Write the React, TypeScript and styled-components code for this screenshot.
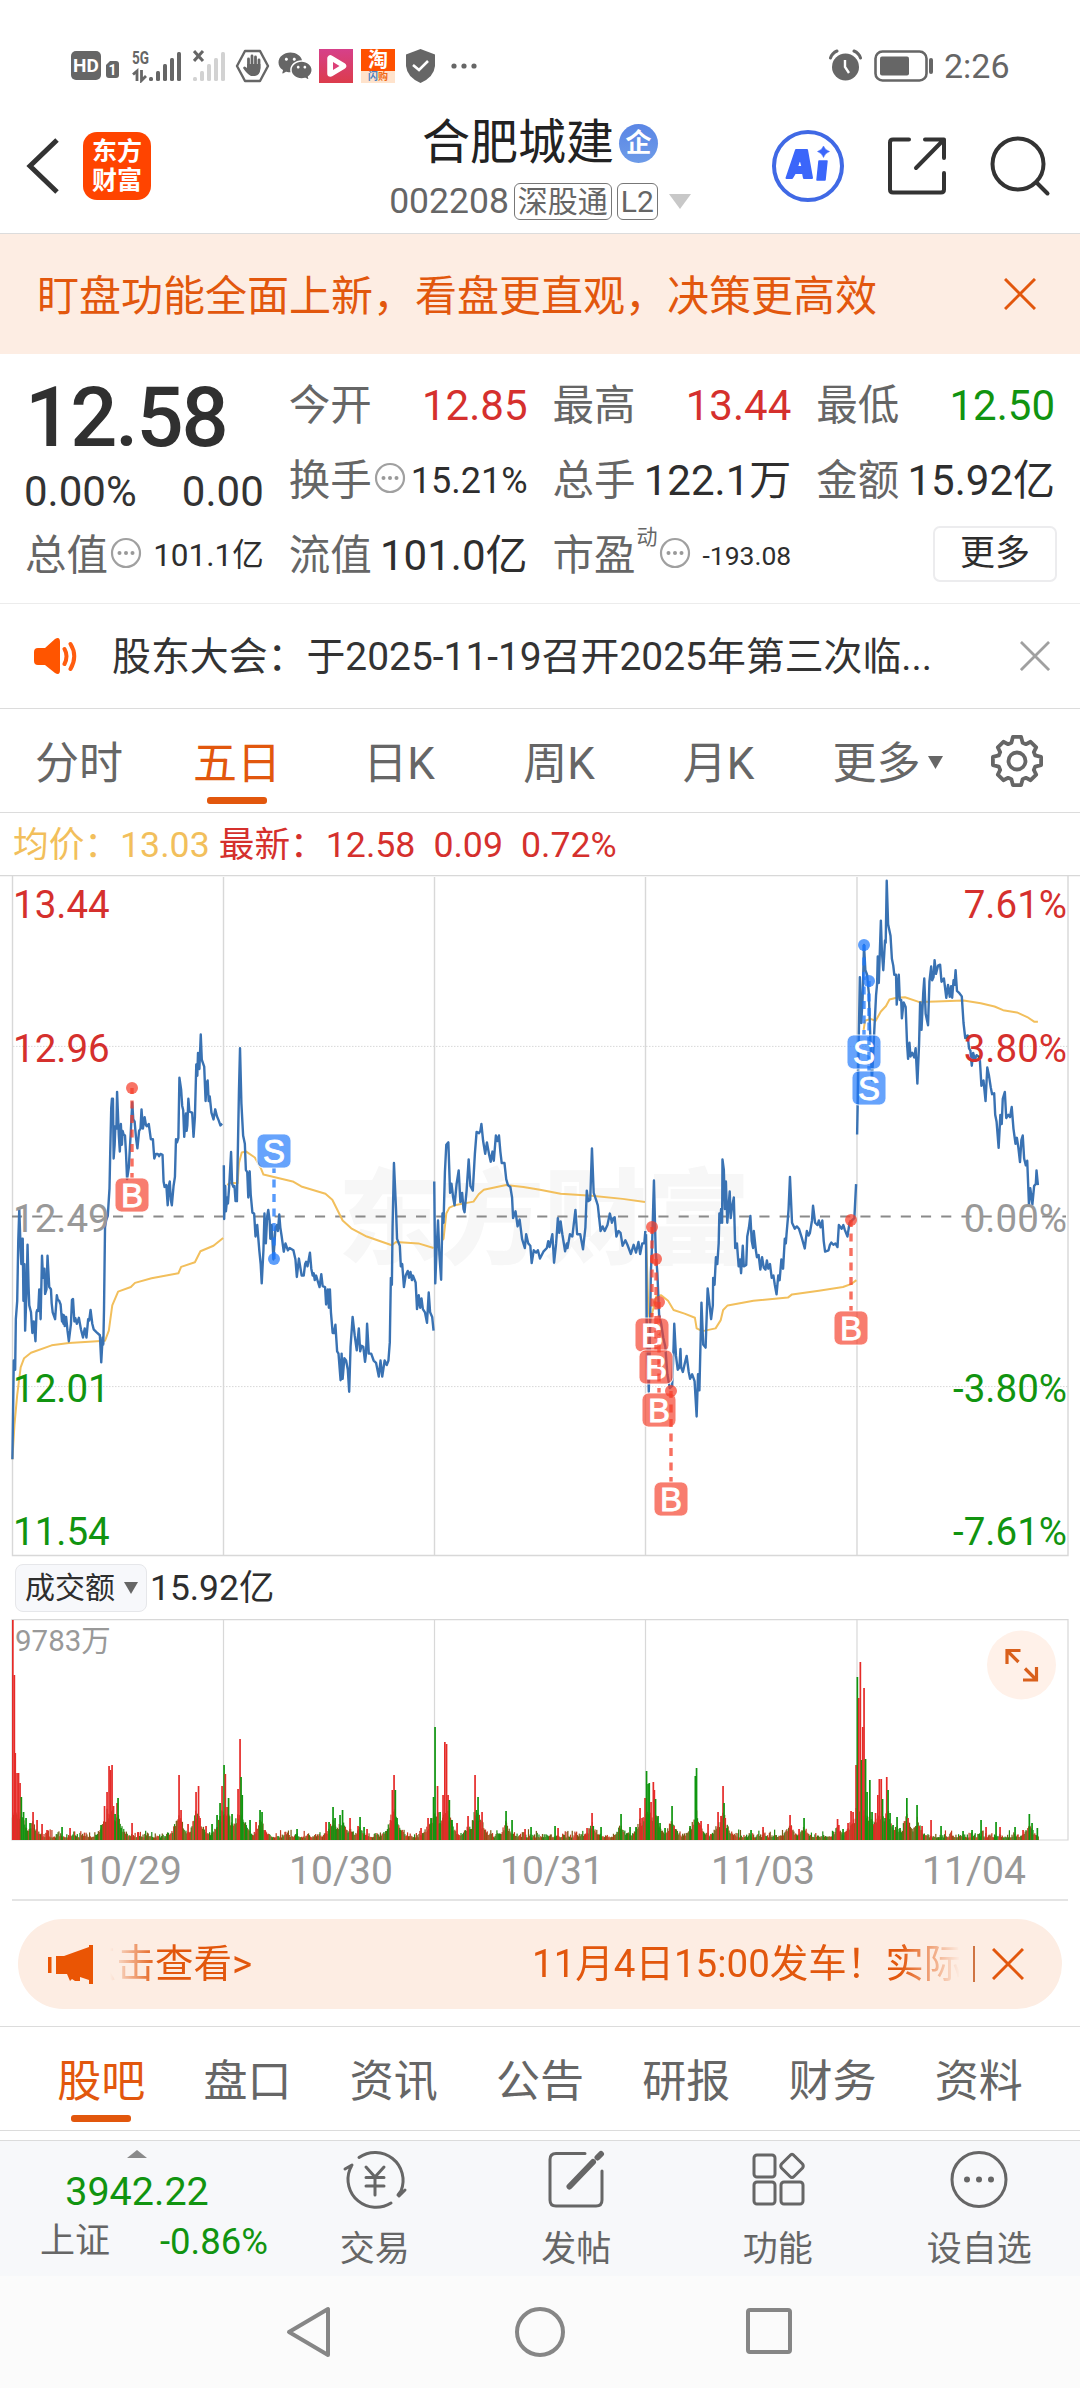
import React from "react";
import styled, { createGlobalStyle } from "styled-components";
import { RiWechatFill } from "react-icons/ri";

const C = {
  ink: "#2e2e2e",
  dark: "#333333",
  mid: "#666666",
  soft: "#999999",
  orange: "#e2570d",
  orangeBg: "#fdede3",
  red: "#d5302d",
  green: "#119410",
  blue: "#3972b3",
  gold: "#f2bf5c",
  line: "#dcdcdc",
};

const GlobalStyle = createGlobalStyle`
  html, body { margin: 0; padding: 0; background: #fff; }
  body { font-family: Roboto, "Noto Sans CJK SC", sans-serif; color: ${C.dark}; }
  * { box-sizing: border-box; }
  svg { display: block; flex: none; }
`;

const Screen = styled.main`
  width: 1080px;
  height: 2388px;
  display: flex;
  flex-direction: column;
  overflow: hidden;
  background: #fff;
`;

/* ---------- status bar ---------- */

const StatusBar = styled.header`
  height: 107px;
  flex: none;
  display: flex;
  align-items: center;
  padding: 24px 71px 0 71px;
`;
const Push = styled.div`
  flex: 1;
`;
const Glyph = styled.svg<{ $ml?: number }>`
  margin-left: ${(p) => p.$ml ?? 0}px;
`;
const WechatSlot = styled.div`
  width: 34px;
  margin-left: 7px;
  color: ${C.mid};
  font-size: 36px;
`;
const DeliveryTile = styled.div`
  width: 34px;
  height: 34px;
  margin-left: 8px;
  display: flex;
  flex-direction: column;
  align-items: center;
  background: linear-gradient(#ff5000 0 66%, #ffe3cc 66%);
`;
const TileTop = styled.span`
  color: #fff;
  font-size: 20px;
  line-height: 22px;
  font-weight: 700;
`;
const TileBottom = styled.span`
  color: #f06a18;
  font-size: 10px;
  line-height: 11px;
  font-weight: 700;
  i { color: #4a80c0; font-style: normal; }
`;
const Clock = styled.span`
  margin-left: 10px;
  width: 65px;
  font-size: 34px;
  line-height: 40px;
  color: ${C.mid};
`;

/* ---------- title bar ---------- */

const TitleBar = styled.div`
  height: 127px;
  flex: none;
  display: grid;
  grid-template-columns: 1fr auto 1fr;
  border-bottom: 1px solid ${C.line};
`;
const TitleSide = styled.div<{ $end?: boolean }>`
  display: flex;
  align-items: center;
  height: 118px;
  padding: 0 29px 0 24px;
  justify-content: ${(p) => (p.$end ? "flex-end" : "flex-start")};
`;
const BrandLogo = styled.div`
  width: 68px;
  height: 68px;
  margin-left: 20px;
  border-radius: 14px;
  background: #ff4400;
  color: #fff;
  font-size: 25px;
  font-weight: 700;
  line-height: 29px;
  padding-top: 5px;
  text-align: center;
`;
const TitleCenter = styled.div`
  display: flex;
  flex-direction: column;
  align-items: center;
  padding-top: 11px;
`;
const NameRow = styled.div`
  display: flex;
  align-items: center;
  height: 50px;
  font-size: 48px;
  line-height: 50px;
  color: #222;
`;
const Badge = styled.span`
  width: 39px;
  height: 39px;
  margin-left: 5px;
  border-radius: 50%;
  background: linear-gradient(#5b86e5, #6d9be8);
  color: #fff;
  font-size: 26px;
  font-weight: 700;
  line-height: 38px;
  text-align: center;
`;
const CodeRow = styled.div`
  display: flex;
  align-items: center;
  margin-top: 14px;
  height: 38px;
  font-size: 35.5px;
  line-height: 38px;
  color: ${C.mid};
`;
const Tag = styled.span`
  height: 37px;
  margin-left: 5px;
  padding: 0 3px;
  border: 1.5px solid #777;
  border-radius: 6px;
  font-size: 30px;
  line-height: 35px;
`;

/* ---------- banners ---------- */

const Banner = styled.div`
  height: 120px;
  flex: none;
  display: flex;
  align-items: center;
  justify-content: space-between;
  padding: 6px 44px 0 37px;
  background: ${C.orangeBg};
  color: ${C.orange};
  font-size: 42px;
  line-height: 60px;
  svg { margin-top: -6px; }
`;
const Notice = styled.div`
  height: 105px;
  flex: none;
  display: flex;
  align-items: center;
  padding: 0 30px 0 34px;
  border-bottom: 1px solid ${C.line};
  font-size: 38.9px;
  line-height: 60px;
`;
const NoticeText = styled.span`
  flex: 1;
  margin-left: 33px;
  margin-top: 1px;
  white-space: nowrap;
`;

/* ---------- quote ---------- */

const Quote = styled.section`
  height: 250px;
  flex: none;
  padding: 14px 25px 0;
  display: grid;
  grid-template-columns: repeat(4, 1fr);
  grid-template-rows: repeat(3, 75px);
  column-gap: 25px;
  border-bottom: 1px solid #ececec;
`;
const LastPrice = styled.div`
  grid-row: span 2;
`;
const Price = styled.div`
  height: 99px;
  font-size: 83px;
  font-weight: 500;
  line-height: 99px;
  letter-spacing: -2px;
  color: #303030;
`;
const Change = styled.div`
  display: flex;
  justify-content: space-between;
  font-size: 42px;
  line-height: 50px;
  margin-left: -1px;
`;
const Cell = styled.div`
  display: flex;
  align-items: center;
  min-width: 0;
  white-space: nowrap;
`;
const Label = styled.span`
  font-size: 41.5px;
  line-height: 60px;
  color: ${C.mid};
`;
const Sup = styled.span`
  align-self: flex-start;
  margin: 7px -1px 0 1px;
  font-size: 21px;
  line-height: 24px;
  color: ${C.mid};
`;
const InfoIcon = styled.svg`
  margin: -6px 0 0 2px;
`;
const Value = styled.span<{ $color?: string; $size?: number }>`
  margin-left: auto;
  font-size: ${(p) => p.$size ?? 42}px;
  line-height: 60px;
  color: ${(p) => p.$color ?? C.ink};
`;
const MoreButton = styled.button`
  width: 124px;
  height: 56px;
  margin: -4px -2px 0 auto;
  padding: 0;
  border: 2px solid #ececee;
  border-radius: 7px;
  background: #fff;
  font: inherit;
  font-size: 35px;
  line-height: 50px;
  color: ${C.ink};
`;

/* ---------- tabs ---------- */

const PeriodTabs = styled.nav`
  height: 104px;
  flex: none;
  display: grid;
  grid-template-columns: 158px 158px 166px 154px 165px 173px 86px;
  border-bottom: 1px solid ${C.line};
`;
const SectionTabs = styled.nav`
  height: 105px;
  flex: none;
  display: grid;
  grid-template-columns: repeat(7, 1fr);
  padding: 0 28px;
  border-top: 1px solid ${C.line};
  border-bottom: 1px solid ${C.line};
`;
const Tab = styled.div<{ $active?: boolean }>`
  display: flex;
  flex-direction: column;
  align-items: center;
  padding-top: 24px;
  font-size: 44px;
  line-height: 62px;
  white-space: nowrap;
  color: ${(p) => (p.$active ? C.orange : C.mid)};
  &::after {
    content: "";
    width: 60px;
    height: 7px;
    margin-top: 2px;
    border-radius: 3px;
    background: ${(p) => (p.$active ? C.orange : "transparent")};
  }
`;
const TabInline = styled.span`
  display: flex;
  align-items: center;
  gap: 7px;
  svg { margin-top: -4px; }
`;
const TabIcon = styled.div`
  padding-top: 25px;
  display: flex;
  justify-content: center;
`;

/* ---------- charts ---------- */

const Legend = styled.div`
  height: 62px;
  flex: none;
  padding-left: 13px;
  font-size: 35.7px;
  line-height: 64px;
  white-space: pre;
  color: ${C.red};
`;
const LegendAvg = styled.span`
  color: ${C.gold};
  margin-right: 9px;
`;
const LegendItem = styled.span`
  margin-right: 18px;
`;
const MetricRow = styled.div`
  height: 62px;
  flex: none;
  display: flex;
  align-items: center;
  padding: 0 0 1px 15px;
  font-size: 35.4px;
  line-height: 48px;
  color: ${C.ink};
`;
const MetricSelect = styled.div`
  width: 132px;
  height: 48px;
  margin-right: 3px;
  padding-left: 9px;
  display: flex;
  align-items: center;
  gap: 9px;
  border: 1px solid #e6e7ea;
  border-radius: 8px;
  background: #f7f8fb;
  font-size: 30px;
`;
const Dates = styled.div`
  height: 59px;
  flex: none;
  margin: 0 12px 18px;
  padding-left: 13px;
  display: grid;
  grid-template-columns: repeat(5, 211px);
  border-bottom: 2px solid #e4e4e4;
  font-size: 39px;
  line-height: 59px;
  text-align: center;
  color: ${C.soft};
  span { margin-left: -13px; padding-left: 12px; }
`;

/* ---------- promo pill ---------- */

const Promo = styled.div`
  height: 90px;
  flex: none;
  margin: 0 18px 17px;
  padding: 0 38px 0 30px;
  display: flex;
  align-items: center;
  border-radius: 45px;
  background: ${C.orangeBg};
  color: ${C.orange};
`;
const Marquee = styled.div`
  width: 850px;
  margin-left: 15px;
  display: flex;
  overflow: hidden;
  white-space: nowrap;
  font-size: 38.5px;
  line-height: 60px;
  mask-image: linear-gradient(90deg, transparent, #000 48px, #000 790px, transparent 850px);
`;
const MarqueeTail = styled.span`
  margin-left: -32px;
  width: 454px;
  flex: none;
`;
const Divider = styled.i`
  width: 2px;
  height: 36px;
  margin: 0 17px 0 14px;
  background: #cf7443;
`;

/* ---------- bottom ---------- */

const ToolBar = styled.footer`
  height: 136px;
  flex: none;
  margin-top: 9px;
  display: grid;
  grid-template-columns: 274px repeat(4, 1fr);
  border-top: 1px solid ${C.line};
  background: #f7f8fa;
`;
const Index = styled.div`
  padding-top: 9px;
  display: flex;
  flex-direction: column;
  align-items: center;
`;
const IndexValue = styled.div`
  margin-top: 10px;
  font-size: 39.5px;
  line-height: 48px;
  color: ${C.green};
`;
const IndexRow = styled.div`
  width: 228px;
  display: flex;
  justify-content: space-between;
  align-self: flex-start;
  margin-left: 40px;
  margin-top: 1px;
  font-size: 35px;
  line-height: 50px;
  color: ${C.mid};
  em { font-style: normal; font-size: 36.5px; color: ${C.green}; }
`;
const Tool = styled.div`
  padding-top: 8px;
  display: flex;
  flex-direction: column;
  align-items: center;
  font-size: 35px;
  line-height: 50px;
  color: ${C.mid};
  svg { margin-bottom: 14px; }
`;
const SystemNav = styled.div`
  height: 112px;
  flex: none;
  display: flex;
  align-items: center;
  padding-left: 285px;
  background: #fbfbfb;
`;

/* ---------- small drawings ---------- */

const Cross = ({ color, size = 32 }: { color: string; size?: number }) => (
  <svg width={size} height={size} viewBox="0 0 32 32" stroke={color} strokeWidth="3" fill="none">
    <path d="M1 1L31 31M31 1L1 31" />
  </svg>
);

const Triangle = ({ w, h, color, up }: { w: number; h: number; color: string; up?: boolean }) => (
  <svg width={w} height={h} viewBox="0 0 10 10" preserveAspectRatio="none" fill={color}>
    <path d={up ? "M0 10H10L5 0Z" : "M0 0H10L5 10Z"} />
  </svg>
);

const Info = () => (
  <InfoIcon width="32" height="32" viewBox="0 0 32 32" fill="none" stroke="#a0a0a0" strokeWidth="2.2">
    <circle cx="16" cy="16" r="14" />
    <g fill="#999" stroke="none">
      <circle cx="9.5" cy="16" r="2" />
      <circle cx="16" cy="16" r="2" />
      <circle cx="22.5" cy="16" r="2" />
    </g>
  </InfoIcon>
);

const SignalBars = ({ color }: { color: string }) => (
  <g fill={color}>
    <rect x="0" y="27" width="4" height="4" rx="1.5" />
    <rect x="7" y="21" width="4" height="10" rx="1.5" />
    <rect x="14" y="14" width="4" height="17" rx="1.5" />
    <rect x="21" y="8" width="4" height="23" rx="1.5" />
    <rect x="28" y="2" width="4" height="29" rx="1.5" />
  </g>
);

const Gear = () => {
  const pts: string[] = [];
  for (let i = 0; i < 8; i++) {
    const a = (i * Math.PI) / 4 - Math.PI / 2;
    const at = (r: number, d: number) =>
      `${(27 + r * Math.cos(a + d)).toFixed(1)},${(27 + r * Math.sin(a + d)).toFixed(1)}`;
    const out = i % 2 ? 23.5 : 24.5;
    pts.push(at(19, -0.3), at(out, -0.17), at(out, 0.17), at(19, 0.3));
  }
  return (
    <svg width="54" height="54" viewBox="0 0 54 54" fill="none" stroke={C.mid} strokeWidth="3.8" strokeLinejoin="round">
      <polygon points={pts.join(" ")} />
      <circle cx="27" cy="27" r="8.5" />
    </svg>
  );
};

/* ---------- price chart ---------- */

/* Plot units: x runs 0..3136 over the full width, y runs 0..1568 over 720px. */
const priceRuns = [
  "36,1305 38,1200 40,1090 44,1110 46,1000 50,960 53,830 56,760 60,850 62,880 64,825 66,825 68,960 71,880 73,1025 77,940 80,838 83,930 85,970 90,985 94,1030 98,1005 103,1048 106,985 108,980 111,982 114,935 118,1000 122,862 125,910 127,910 129,890 131,945 135,935 138,862 143,930 148,935 150,965 153,985 160,1000 165,948 168,958 172,960 176,968 180,1005 182,990 184,1010 186,992 188,1015 192,995 196,1025 200,1048 206,1010 209,958 212,956 216,1005 219,998 223,1010 229,997 235,1022 241,1040 246,1020 251,1040 256,1000 259,1003 263,980 268,1010 272,1022 280,1028 290,1035 294,1094 298,1040 300,1055 302,980 305,800 308,785 313,775 318,715 320,640 323,540 325,520 328,520 330,650 333,620 335,580 338,585 340,505 345,600 348,635 351,575 354,620 356,590 359,598 363,600 366,640 369,695 374,670 380,590 384,528 387,565 391,570 395,605 399,628 404,590 408,585 411,543 415,585 420,560 424,578 427,580 432,575 438,608 444,608 448,650 453,640 458,640 462,645 466,640 472,642 475,700 478,712 483,708 487,752 490,710 493,700 496,740 499,752 504,710 508,690 511,608 514,615 518,605 521,474 526,500 529,535 532,545 535,603 540,552 542,590 544,578 547,520 550,548 558,550 562,603 566,560 570,445 573,470 575,420 577,452 579,455 583,380 586,435 593,450 597,525 600,485 603,480 606,525 609,515 614,550 620,565 625,543 630,558 635,567 640,578 645,574",
  "650,665 651,782 654,710 656,765 660,735 662,748 666,705 671,636 674,705 678,712 681,710 684,743 688,743 689,700 691,620 694,500 697,410 701,530 706,600 711,618 714,675 718,680 721,735 725,678 728,728 733,768 738,770 742,820 747,795 753,850 757,880 760,922 765,850 768,770 772,835 776,775 779,762 783,785 785,825 789,795 794,870 800,800 804,795 807,808 811,772 814,800 818,820 824,853 829,835 836,850 841,845 852,850 858,870 862,908 868,868 876,905 882,905 886,880 889,875 893,885 900,855 904,890 908,905 911,900 914,915 918,905 923,918 928,930 933,902 937,928 944,930 947,968 952,935 955,975 958,935 961,985 966,1030 970,1030 974,1012 979,1070 983,1075 989,1133 992,1075 995,1130 1000,1085 1005,1090 1010,1110 1014,1158 1018,1060 1024,995 1030,1035 1036,1068 1042,1020 1046,1070 1050,1058 1055,1060 1060,1093 1063,1075 1066,1010 1071,1075 1078,1075 1085,1090 1092,1095 1100,1125 1105,1090 1110,1125 1117,1090 1123,1100 1128,1090 1132,1050 1135,910 1138,925 1140,800 1144,660 1150,760 1153,825 1161,840 1164,885 1168,880 1173,930 1178,905 1184,895 1188,910 1192,897 1196,915 1199,905 1207,920 1211,978 1216,948 1220,975 1224,955 1228,978 1234,985 1240,1008 1245,942 1249,985 1255,995 1259,1025",
  "1261,700 1264,922 1268,845 1272,785 1276,860 1281,914 1285,770 1288,790 1292,680 1296,620 1302,615 1307,725 1311,705 1316,735 1320,752 1326,705 1332,676 1337,745 1342,725 1346,760 1349,767 1355,720 1361,652 1366,710 1373,720 1379,640 1384,592 1391,595 1395,590 1398,575 1403,612 1409,640 1414,615 1420,640 1425,657 1430,635 1434,655 1440,600 1445,612 1449,600 1453,635 1457,660 1465,660 1470,695 1475,708 1482,712 1487,735 1490,780 1497,765 1503,798 1509,783 1516,825 1524,845 1528,815 1534,835 1540,840 1544,878 1550,850 1557,855 1562,850 1568,868 1578,853 1588,845 1592,830 1596,843 1604,815 1609,877 1615,835 1620,780 1624,812 1628,787 1633,815 1641,852 1646,835 1648,845 1655,815 1662,820 1671,762 1676,815 1685,815 1693,848 1700,800 1704,720 1708,743 1714,740 1719,628 1724,725 1731,740 1736,752 1740,780 1744,808 1750,798 1756,808 1764,795 1771,770 1777,790 1781,780 1785,778 1790,820 1796,808 1802,812 1808,840 1816,828 1822,838 1832,858 1840,838 1847,855 1854,832 1859,858 1865,835 1871,835 1874,808",
  "1876,815 1878,1000 1884,1158 1887,1060 1890,900 1894,830 1899,698 1904,850 1909,900 1914,990 1920,1010 1926,1040 1932,1060 1938,1120 1945,1150 1952,1145 1956,1060 1958,1010 1963,1080 1968,1110 1973,1105 1976,1065 1978,1105 1983,1115 1989,1095 1994,1080 2000,1115 2004,1130 2010,1120 2017,1135 2023,1212 2027,1120 2031,1155 2034,1060 2037,964 2042,1055 2049,1062 2055,933 2060,965 2065,1000 2070,970 2071,910 2075,925 2079,865 2083,880 2087,835 2089,770 2092,790 2094,760 2097,790 2098,652 2102,675 2105,760 2108,700 2112,790 2119,722 2122,780 2126,755 2131,735 2135,845 2140,835 2145,885 2149,870 2152,900 2157,840 2160,885 2167,882 2170,820 2175,800 2179,775 2183,830 2187,845 2189,808 2195,850 2198,865 2203,860 2208,892 2213,865 2218,888 2223,892 2227,872 2231,890 2236,880 2241,910 2246,905 2250,925 2255,946 2260,905 2264,915 2269,870 2274,890 2279,825 2282,835 2284,815 2288,780 2290,760 2294,690 2300,790 2308,803 2314,798 2320,803 2328,822 2337,846 2343,808 2348,818 2352,812 2358,785 2361,753 2367,790 2374,795 2378,785 2383,800 2388,785 2392,830 2396,853 2406,850 2410,838 2414,833 2420,838 2426,835 2432,843 2436,795 2444,803 2449,795 2453,805 2461,820 2467,790 2474,785 2481,780 2486,706",
  "2489,598 2491,520 2494,380 2497,255 2501,355 2505,300 2509,185 2513,240 2518,250 2523,290 2528,400 2532,480 2536,420 2539,370 2544,295 2547,270 2549,210 2552,268 2558,132 2561,200 2565,240 2570,175 2572,180 2575,45 2579,140 2586,165 2590,215 2594,230 2597,250 2602,250 2604,315 2610,250 2613,305 2617,305 2619,345 2624,310 2630,320 2634,400 2637,433 2641,398 2644,428 2649,420 2655,430 2659,410 2664,487 2669,400 2672,310 2676,370 2681,290 2684,258 2688,335 2695,360 2699,265 2704,232 2707,262 2711,255 2714,218 2718,248 2724,230 2730,228 2734,265 2741,258 2748,300 2753,272 2758,298 2762,275 2765,300 2769,262 2772,272 2775,240 2779,285 2786,290 2793,297 2798,355 2803,388 2810,382 2814,410 2818,415 2822,448 2826,420 2831,435 2836,425 2845,430 2850,492 2856,480 2862,525 2867,452 2872,470 2877,495 2881,510 2887,508 2890,555 2894,570 2900,627 2905,555 2909,575 2912,520 2918,505 2922,562 2928,555 2933,560 2938,538 2943,585 2949,618 2953,605 2957,625 2962,658 2966,610 2970,600 2974,650 2979,665 2983,655 2988,750 2992,715 2998,750 3003,710 3008,705 3010,676 3014,708",
];
const avgRuns = [
  "36,1305 42,1230 50,1165 60,1105 70,1085 90,1073 150,1057 200,1052 305,1047 316,1025 326,970 343,940 380,930 392,921 440,911 518,900 526,886 566,876 582,852 620,840 648,823",
  "660,708 668,703 690,704 694,660 702,637 715,635 740,648 758,672 765,685 850,700 875,711 945,727 965,740 995,785 1020,802 1065,820 1138,839 1150,832 1215,835 1259,845",
  "1282,830 1288,825 1296,770 1305,757 1320,752 1375,744 1390,728 1405,718 1470,708 1520,712 1568,718 1628,727 1718,731 1808,738 1873,745",
  "1876,815 1882,960 1887,1010 1893,990 1906,950 1920,948 1940,960 1956,980 1988,988 2018,997 2023,1020 2040,1026 2078,1020 2093,1002 2100,980 2113,970 2188,960 2288,953 2300,946 2378,938 2448,930 2473,923 2487,915",
  "2508,370 2512,350 2528,346 2543,350 2558,330 2573,318 2583,304 2603,300 2628,299 2668,309 2718,308 2798,306 2848,312 2888,319 2913,327 2953,332 2983,342 3003,352 3014,352",
];

type Mark = { kind: "B" | "S"; x: number; dot: number; box: number };
const marks: Mark[] = [
  { kind: "B", x: 132, dot: 1088, box: 1195 },
  { kind: "S", x: 274, dot: 1259, box: 1151 },
  { kind: "B", x: 652, dot: 1227, box: 1335 },
  { kind: "B", x: 656, dot: 1259, box: 1367 },
  { kind: "B", x: 659, dot: 1302, box: 1410 },
  { kind: "B", x: 671, dot: 1391, box: 1499 },
  { kind: "B", x: 851, dot: 1220, box: 1328 },
  { kind: "S", x: 864, dot: 945, box: 1052 },
  { kind: "S", x: 869, dot: 981, box: 1088 },
];
const scaleLabels = [
  { left: "13.44", right: "7.61%", y: 918, color: C.red },
  { left: "12.96", right: "3.80%", y: 1061.5, color: C.red },
  { left: "12.49", right: "0.00%", y: 1231.5, color: C.soft },
  { left: "12.01", right: "-3.80%", y: 1402, color: C.green },
  { left: "11.54", right: "-7.61%", y: 1545, color: C.green },
];
const dayLines = [223.5, 434.5, 645.5, 857];

const TradeMark = ({ kind, x, dot, box }: Mark) => {
  const fill = kind === "B" ? "#f53f2b" : "#1e78fa";
  const edge = dot < box ? box - 17 : box + 17;
  return (
    <g>
      <line x1={x} x2={x} y1={edge} y2={dot} stroke={fill} strokeOpacity=".75" strokeWidth="3.4" strokeDasharray="8 6.5" strokeDashoffset="3" />
      <circle cx={x} cy={dot} r="6" fill={fill} fillOpacity=".72" />
      <rect x={x - 17} y={box - 17} width="34" height="34" rx="6.5" fill={fill} fillOpacity=".68" stroke="#fff" strokeOpacity=".8" strokeWidth="1.2" />
      <text x={x} y={box + 12} textAnchor="middle" fill="#fff" stroke="#fff" strokeWidth=".9" fontSize="33" fontFamily="Liberation Sans, sans-serif">
        {kind}
      </text>
    </g>
  );
};

const PriceChart = () => (
  <svg width="1080" height="682" viewBox="0 875 1080 682" fontFamily='Roboto, "Noto Sans CJK SC", sans-serif'>
    <text x="544" y="1256" textAnchor="middle" fontSize="103" fontWeight="900" fill="#f7f7f7">
      东方财富
    </text>
    <g stroke="#d8d8d8" strokeWidth="1.4" fill="none">
      <path d="M0 875.6H1080" />
      <path d="M12.5 876V1555.5H1068V876" />
      {dayLines.map((x) => (
        <path key={x} d={`M${x} 877V1555`} />
      ))}
      <path d="M13 1046.4H1068M13 1386.6H1068" strokeDasharray="1.5 1.5" strokeWidth="1" />
    </g>
    <path d="M12 1216.5H1066" stroke="#8a8a8a" strokeWidth="2" strokeDasharray="10.1 10.1" />
    <g transform="translate(0 860) scale(.34436 .45918)" fill="none" strokeLinejoin="round">
      {avgRuns.map((run) => (
        <polyline key={run} points={run} stroke={C.gold} strokeWidth="2" vectorEffect="non-scaling-stroke" />
      ))}
      {priceRuns.map((run) => (
        <polyline key={run} points={run} stroke={C.blue} strokeWidth="2.4" vectorEffect="non-scaling-stroke" />
      ))}
    </g>
    {scaleLabels.map((l) => (
      <g key={l.left} fill={l.color} fontSize="38.5">
        <text x="13" y={l.y}>{l.left}</text>
        <text x="1067" y={l.y} textAnchor="end">{l.right}</text>
      </g>
    ))}
    {marks.map((m) => (
      <TradeMark key={`${m.x}`} {...m} />
    ))}
  </svg>
);

/* ---------- volume chart ---------- */

const spikes =
  "12.8:220r 14.3:165r 15.2:87r 17:67r 18.5:67r 20:57r 21.3:43g 23.5:28g 26:22g 30:17g 33:28r 37:20r 42:16r 47:10r 62:13g 70:12r 101:15g 104.5:34r 107:48r 109:74r 110.5:70r 112:75r 113.5:34r 115:26g 117:37r 118:42g 121:12g 132:17r 138:8r 179:65r 181:30r 188:16r 196:48r 198.5:54r 200:22r 206:14r 212:16g 217:25g 220:37g 222:54r 224:75g 225.3:66r 227:33r 228.5:42g 232:26g 238:51r 240:101r 241:63g 242.2:45g 246:15g 250:20g 256:18r 260:30g 262:28g 265:10r 297:11g 326:18r 329:18g 333:33g 335:22g 340:25g 342.5:30g 350:22r 358:14r 360:23g 364:13g 367:11r 390.5:20r 392.3:50r 394:65r 395.3:50g 397:22g 400:10g 421:12r 428:22r 431:22g 433.5:43g 435:113g 437.5:54r 440:28g 443:45r 444.8:98r 446.5:96r 448:45r 449.3:40g 452:20g 457:17r 468:24r 475:65r 476.5:30g 478:43g 480:18r 482:28r 506:29g 512:20g 525:11r 531:13g 555:14g 558:12r 587:12r 592:27r 593.2:14g 601:13g 621:26g 630:13g 636:13g 640:32r 642:22r 645:42r 646.5:69g 648:56g 649.2:57g 651:38r 653.3:58r 654.3:50r 655.5:41g 658:24g 660:17g 665:12g 672:34g 674:14r 690:14g 695.3:64g 696.5:72g 699:15r 701:19r 708:16r 718:28r 721:24r 723:54r 724:37g 725.2:22r 727:12g 751:10g 763:13r 790:25r 791.2:14r 799:11r 804:22g 837.5:21r 838.8:15r 843:11g 848:17r 851:29r 853:28r 856:75r 857.3:163g 858.7:142r 860.3:178r 861.5:80g 862.7:113r 864:152r 865.5:81g 867:48g 869.8:60g 872:28g 874:16r 875.5:27r 877.8:45r 879.3:61r 881.2:61r 882.5:41g 885:22g 886.7:63r 888:50g 890:27g 893:15g 897:23g 900:12g 906.8:42g 908:22r 917:35g 919:14r 922:14r 931:20r 941:14g 963:9g 972:10g 981:20g 986:13r 996:18g 1000:13r 1015:13g 1023:10r 1029.3:26g 1032:17g 1037.3:12g"
    .split(" ")
    .map((s) => {
      const [x, rest] = s.split(":");
      return { x: +x, h: parseInt(rest, 10), color: rest.endsWith("r") ? "#e52b28" : "#0f9610" };
    });

const baseBars = (() => {
  const out: { x: number; h: number; color: string }[] = [];
  let seed = 7;
  const rnd = () => (seed = (seed * 16807) % 2147483647) / 2147483647;
  for (let x = 12.5; x < 1038.5; x += 0.876) {
    let h = 2.5 + rnd() * rnd() * 9;
    for (const s of spikes) {
      const d = Math.abs(s.x - x);
      if (s.h > 20 && d < 14) h = Math.max(h, Math.min(s.h, 45) * 0.62 * Math.exp(-d / 6) * (0.7 + rnd() * 0.5));
    }
    const mix = rnd();
    out.push({ x, h, color: mix < 0.36 ? "#c83a1e" : mix < 0.7 ? "#7a5a12" : "#1f8a10" });
  }
  return out;
})();

const VolumeChart = () => (
  <svg width="1080" height="223" viewBox="0 1619 1080 223" fontFamily='Roboto, "Noto Sans CJK SC", sans-serif'>
    <g stroke="#d8d8d8" strokeWidth="1.2" fill="none">
      <path d="M12 1619.6H1068V1840H12Z" />
      {dayLines.map((x) => (
        <path key={x} d={`M${x} 1619V1840`} />
      ))}
    </g>
    {baseBars.map((b) => (
      <rect key={b.x} x={b.x - 0.6} y={1840 - b.h} width="1.2" height={b.h} fill={b.color} />
    ))}
    {spikes.map((b) => (
      <rect key={b.x} x={b.x - 0.8} y={1840 - b.h} width="1.7" height={b.h} fill={b.color} />
    ))}
    <text x="15" y="1651" fontSize="29.5" fill={C.soft}>9783万</text>
    <circle cx="1021.5" cy="1665" r="34.5" fill="#fff1e9" />
    <g stroke="#d9601c" strokeWidth="3.2" fill="none">
      <path d="M1007 1664V1650.5H1020.5M1007.5 1651L1018.5 1662" />
      <path d="M1023 1680H1036.5V1667M1036 1679.5L1025 1668.5" />
    </g>
  </svg>
);

/* ---------- page ---------- */

const sections = ["股吧", "盘口", "资讯", "公告", "研报", "财务", "资料"];

export default function App() {
  return (
    <Screen>
      <GlobalStyle />
      <StatusBar>
        <svg width="49" height="32" viewBox="0 0 49 32">
          <rect x="0" y="1" width="30" height="29" rx="5" fill={C.mid} />
          <text x="15" y="22" textAnchor="middle" fontFamily="Roboto" fontWeight="700" fontSize="19" fill="#fff">HD</text>
          <path d="M36 14L39 11H45Q48 11 48 14V25Q48 28 45 28H38Q35 28 35 25V15Z" fill={C.mid} />
          <text x="41.5" y="25" textAnchor="middle" fontFamily="Roboto" fontWeight="700" fontSize="14" fill="#fff">1</text>
        </svg>
        <Glyph $ml={12} width="50" height="34" viewBox="0 0 50 34">
          <text x="0" y="15" fontFamily="Roboto" fontWeight="700" fontSize="18" textLength="17" lengthAdjust="spacingAndGlyphs" fill={C.mid}>5G</text>
          <path d="M5 32V22L1 25.500M9.500 21V31.500L14 27" stroke={C.mid} strokeWidth="2.800" fill="none" />
          <g transform="translate(17 1)"><SignalBars color={C.mid} /></g>
        </Glyph>
        <Glyph $ml={11} width="33" height="34" viewBox="0 0 33 34">
          <g transform="translate(0 1)"><SignalBars color="#d2d2d2" /></g>
          <path d="M1 2L10 12M10 2L1 12" stroke={C.mid} strokeWidth="3" />
        </Glyph>
        <Glyph $ml={9} width="35" height="34" viewBox="0 0 35 34">
          <path d="M10 2H25L33 17L25 32H10L2 17Z" fill="none" stroke={C.mid} strokeWidth="2.4" strokeLinejoin="round" />
          <path d="M13.5 19V10M17 19V7M20.5 19V8M24 19V11" stroke={C.mid} strokeWidth="2.8" strokeLinecap="round" />
          <path d="M12 15H25.4V20Q25 26 20 27H16Q12 25 8 19Q9 16 12 19Z" fill={C.mid} />
        </Glyph>
        <WechatSlot><RiWechatFill /></WechatSlot>
        <Glyph $ml={8} width="34" height="34" viewBox="0 0 34 34">
          <defs>
            <linearGradient id="play" x2="0" y2="1"><stop stopColor="#d6408a" /><stop offset="1" stopColor="#dc3c4c" /></linearGradient>
          </defs>
          <rect width="34" height="34" fill="url(#play)" />
          <path d="M11.500 9.500V24.500L24 17Z" fill="none" stroke="#fff" strokeWidth="6.500" strokeLinejoin="round" />
          <path d="M14 13V21L20.500 17Z" fill="#dc4078" />
        </Glyph>
        <DeliveryTile>
          <TileTop>淘</TileTop>
          <TileBottom><i>闪</i>购</TileBottom>
        </DeliveryTile>
        <Glyph $ml={11} width="29" height="34" viewBox="0 0 29 34">
          <path d="M14.500 0L29 5.500V17Q28 28 14.500 34Q1 28 0 17V5.500Z" fill={C.mid} />
          <path d="M7 16L13 21L22 12" fill="none" stroke="#fff" strokeWidth="2.600" />
        </Glyph>
        <Glyph $ml={16} width="28" height="6" viewBox="0 0 28 6" fill={C.mid}>
          <circle cx="3" cy="3" r="2.600" /><circle cx="13" cy="3" r="2.600" /><circle cx="23" cy="3" r="2.600" />
        </Glyph>
        <Push />
        <svg width="33" height="33" viewBox="0 0 33 33">
          <circle cx="16.500" cy="18" r="13.500" fill={C.mid} />
          <path d="M1.500 9Q3 4 8 2M31.500 9Q30 4 25 2" stroke={C.mid} strokeWidth="3" fill="none" strokeLinecap="round" />
          <path d="M16 11V18L20 24" stroke="#fff" strokeWidth="2.400" fill="none" />
        </svg>
        <Glyph $ml={12} width="60" height="34" viewBox="0 0 60 34">
          <rect x="1.500" y="2.500" width="51" height="29" rx="7" fill="none" stroke={C.mid} strokeWidth="2.600" />
          <rect x="6" y="7.500" width="29" height="19" rx="2" fill={C.mid} />
          <rect x="55" y="9" width="4" height="16" rx="2" fill={C.mid} />
        </Glyph>
        <Clock>2:26</Clock>
      </StatusBar>

      <TitleBar>
        <TitleSide>
          <svg width="39" height="60" viewBox="0 0 39 60" fill="none" stroke={C.dark} strokeWidth="5">
            <path d="M33 4L6 30L33 56" />
          </svg>
          <BrandLogo>东方<br />财富</BrandLogo>
        </TitleSide>
        <TitleCenter>
          <NameRow>合肥城建<Badge>企</Badge></NameRow>
          <CodeRow>
            002208
            <Tag>深股通</Tag>
            <Tag>L2</Tag>
            <Glyph as="span" $ml={11}><Triangle w={22} h={15} color="#c8c8c8" /></Glyph>
          </CodeRow>
        </TitleCenter>
        <TitleSide $end>
          <svg width="74" height="74" viewBox="0 0 74 74">
            <circle cx="37" cy="37" r="34" fill="none" stroke="#4069e5" strokeWidth="4" />
            <g fill="#3b66fa" stroke="#3b66fa" strokeLinejoin="round">
              <path fillRule="evenodd" strokeWidth="2" d="M25 21H36L41 49H33L32 44H24L21 49H15.500ZM29 29L26 38H31.500Z" />
              <path strokeWidth="1.500" d="M48 32H56L54 51H46Z" />
              <path strokeWidth=".5" d="M52.500 17Q54 21 58.500 22.500Q54 24 52.500 28.500Q51 24 46.500 22.500Q51 21 52.500 17Z" />
            </g>
          </svg>
          <Glyph $ml={43} width="58" height="58" viewBox="0 0 58 58" fill="none" stroke={C.dark} strokeWidth="4" strokeLinecap="round" strokeLinejoin="round">
            <path d="M21 2.500H5Q2 2.500 2 5.500V52.500Q2 55.500 5 55.500H53Q56 55.500 56 52.500V36" />
            <path d="M37 2.500H56V21M55 3.500L28 31" />
          </Glyph>
          <Glyph $ml={44} width="61" height="61" viewBox="0 0 61 61" fill="none" stroke={C.dark} strokeWidth="4" strokeLinecap="round">
            <circle cx="28" cy="28" r="25.500" />
            <path d="M46.500 46.500L57.500 57.500" />
          </Glyph>
        </TitleSide>
      </TitleBar>

      <Banner>
        盯盘功能全面上新，看盘更直观，决策更高效
        <Cross color={C.orange} />
      </Banner>

      <Quote>
        <LastPrice>
          <Price>12.58</Price>
          <Change><span>0.00%</span><span>0.00</span></Change>
        </LastPrice>
        <Cell><Label>今开</Label><Value $color={C.red}>12.85</Value></Cell>
        <Cell><Label>最高</Label><Value $color={C.red}>13.44</Value></Cell>
        <Cell><Label>最低</Label><Value $color={C.green}>12.50</Value></Cell>
        <Cell><Label>换手</Label><Info /><Value $size={36}>15.21%</Value></Cell>
        <Cell><Label>总手</Label><Value>122.1万</Value></Cell>
        <Cell><Label>金额</Label><Value>15.92亿</Value></Cell>
        <Cell><Label>总值</Label><Info /><Value $size={31.5}>101.1亿</Value></Cell>
        <Cell><Label>流值</Label><Value>101.0亿</Value></Cell>
        <Cell><Label>市盈</Label><Sup>动</Sup><Info /><Value $size={26.5}>-193.08</Value></Cell>
        <Cell><MoreButton>更多</MoreButton></Cell>
      </Quote>

      <Notice>
        <svg width="45" height="38" viewBox="0 0 45 38">
          <path d="M4 11H11L21 2Q26 -1 26 5V33Q26 39 21 36L11 28H4Q0 28 0 24V15Q0 11 4 11Z" fill="#ff5500" />
          <path d="M30.500 12Q34.500 19 30.500 27M36.500 7Q44 19 36.500 32" fill="none" stroke="#ff5d10" strokeWidth="4" strokeLinecap="round" />
        </svg>
        <NoticeText>股东大会：于2025-11-19召开2025年第三次临...</NoticeText>
        <Cross color="#a0a0a0" size={30} />
      </Notice>

      <PeriodTabs>
        <Tab>分时</Tab>
        <Tab $active>五日</Tab>
        <Tab>日K</Tab>
        <Tab>周K</Tab>
        <Tab>月K</Tab>
        <Tab><TabInline>更多<Triangle w={15} h={13} color={C.mid} /></TabInline></Tab>
        <TabIcon><Gear /></TabIcon>
      </PeriodTabs>

      <Legend>
        <LegendAvg>均价：13.03</LegendAvg>
        <LegendItem>最新：12.58</LegendItem>
        <LegendItem>0.09</LegendItem>
        <LegendItem>0.72%</LegendItem>
      </Legend>
      <PriceChart />
      <MetricRow>
        <MetricSelect>成交额<Triangle w={14} h={12} color={C.mid} /></MetricSelect>
        15.92亿
      </MetricRow>
      <VolumeChart />
      <Dates>
        {["10/29", "10/30", "10/31", "11/03", "11/04"].map((d) => (
          <span key={d}>{d}</span>
        ))}
      </Dates>

      <Promo>
        <svg width="47" height="40" viewBox="0 0 47 40" fill="#ea5504">
          <rect x="0" y="13" width="3.500" height="16" />
          <path d="M8 12H16L41 3V1H45V40H41V36L32 33V37H27L24 35L22 37L19 30H8Z" />
        </svg>
        <Marquee>
          <MarqueeTail>点击查看&gt;</MarqueeTail>
          <span>11月4日15:00发车！实际</span>
        </Marquee>
        <Divider />
        <Cross color={C.orange} />
      </Promo>

      <SectionTabs>
        {sections.map((s, i) => (
          <Tab key={s} $active={i === 0}>{s}</Tab>
        ))}
      </SectionTabs>

      <ToolBar>
        <Index>
          <Triangle w={20} h={8} color="#8a8a8a" up />
          <IndexValue>3942.22</IndexValue>
          <IndexRow>上证<em>-0.86%</em></IndexRow>
        </Index>
        <Tool>
          <svg width="66" height="62" viewBox="0 0 66 62" fill="none" stroke={C.mid} strokeWidth="3" strokeLinecap="round">
            <path d="M17 8.500A28 28 0 0 1 59 42L56 46M57 47L63 41" />
            <path d="M49 54A28 28 0 0 1 8 20L9.500 17M10 16L3 20" />
            <path d="M24 18L33 28L42 18M33 28V46M24 28.500H42M24 37H42" />
          </svg>
          交易
        </Tool>
        <Tool>
          <svg width="58" height="62" viewBox="0 0 58 62" fill="none" stroke={C.mid} strokeWidth="3" strokeLinecap="round">
            <path d="M38 4.500H9Q3 4.500 3 10.500V51Q3 57 9 57H49Q55 57 55 51V22" />
            <path d="M22.500 37.500L46 13M50.500 8.500L54 5" strokeWidth="6" />
          </svg>
          发帖
        </Tool>
        <Tool>
          <svg width="54" height="62" viewBox="0 0 54 62" fill="none" stroke={C.mid} strokeWidth="3">
            <rect x="3" y="6" width="21" height="22" rx="3" />
            <rect x="3" y="33" width="21" height="22" rx="3" />
            <rect x="30" y="33" width="22" height="22" rx="3" />
            <path d="M39 6.500Q41 4 43 6.500L51.500 15Q53 17 51.500 19L43 27.500Q41 29.500 39 27.500L30.500 19Q29 17 30.500 15Z" />
          </svg>
          功能
        </Tool>
        <Tool>
          <svg width="60" height="62" viewBox="0 0 60 62">
            <circle cx="30" cy="30.500" r="27" fill="none" stroke={C.mid} strokeWidth="3" />
            <g fill={C.mid}><circle cx="18" cy="30.500" r="3" /><circle cx="30" cy="30.500" r="3" /><circle cx="42" cy="30.500" r="3" /></g>
          </svg>
          设自选
        </Tool>
      </ToolBar>

      <SystemNav>
        <svg width="46" height="52" viewBox="0 0 46 52" fill="none" stroke="#868686" strokeWidth="4" strokeLinejoin="round">
          <path d="M43 3V49L4 26Z" />
        </svg>
        <Glyph $ml={183} width="52" height="52" viewBox="0 0 52 52" fill="none" stroke="#868686" strokeWidth="4">
          <circle cx="26" cy="26" r="23" />
        </Glyph>
        <Glyph $ml={178} width="50" height="50" viewBox="0 0 50 50" fill="none" stroke="#868686" strokeWidth="4">
          <rect x="4" y="3" width="42" height="42" rx="2" />
        </Glyph>
      </SystemNav>
    </Screen>
  );
}
